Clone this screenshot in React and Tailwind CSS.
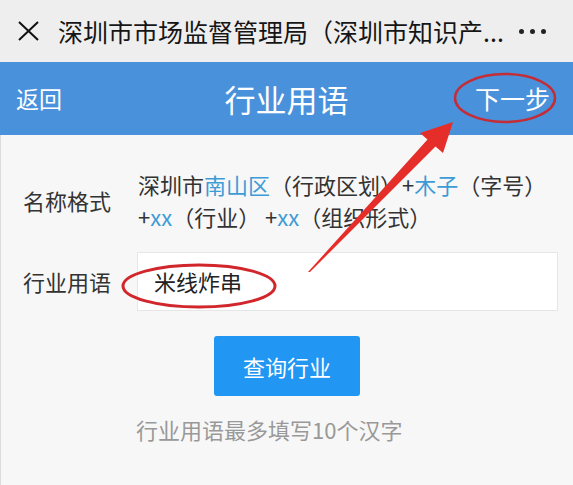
import React from "react";

const cjk = { fontFamily: '"Noto Sans CJK SC", "Noto Sans", sans-serif' };

function Annotations() {
    return (
        <svg className="absolute inset-0 pointer-events-none" width="573" height="485" viewBox="0 0 573 485">
            <ellipse cx="505" cy="98" rx="50" ry="24" fill="none" stroke="#c42d36" strokeWidth="2.5"/>
            <ellipse cx="199" cy="286" rx="76" ry="21" fill="none" stroke="#d1262b" strokeWidth="3"/>
            <polygon
                points="308,272 427.5,139.5 420,133 453,122 443,153 435.5,146.5 310,272"
                fill="#e52e2a"
            />
        </svg>
    );
}

export default function App() {
    return (
        <div className="relative w-[573px] h-[485px] overflow-hidden bg-[#f7f7f7]" style={cjk}>
            {/* wechat top bar */}
            <div className="h-[62px] bg-[#efeeee] flex items-center">
                <svg className="ml-[18px]" width="21" height="20" viewBox="0 0 21 20">
                    <path d="M1 1 L20 19 M20 1 L1 19" stroke="#111" strokeWidth="2" fill="none"/>
                </svg>
                <span className="ml-[19px] text-[25px] leading-none text-[#151515] whitespace-nowrap">
                    深圳市市场监督管理局（深圳市知识产...
                </span>
                <div className="ml-auto mr-[27px] flex gap-[6px]">
                    <span className="w-[5px] h-[5px] rounded-full bg-[#222]"></span>
                    <span className="w-[5px] h-[5px] rounded-full bg-[#222]"></span>
                    <span className="w-[5px] h-[5px] rounded-full bg-[#222]"></span>
                </div>
            </div>

            {/* blue header */}
            <div className="relative h-[73px] bg-[#4a91dc] flex items-center text-white">
                <span className="ml-[16px] text-[23px]">返回</span>
                <span className="absolute left-0 right-0 text-center text-[31px] leading-none">行业用语</span>
                <span className="ml-auto mr-[23px] text-[25px]">下一步</span>
            </div>

            {/* content */}
            <div className="border-l border-[#dcdcdc] h-full pt-[33px]">
                <div className="flex items-center">
                    <span className="w-[137px] pl-[22px] text-[22px] text-[#333]">名称格式</span>
                    <div className="text-[22px] leading-[32px] text-[#333]">
                        <div>
                            深圳市<span className="text-[#3d9bd6]">南山区</span>（行政区划）+<span className="text-[#3d9bd6]">木子</span>（字号）
                        </div>
                        <div>
                            +<span className="text-[#3d9bd6]">xx</span>（行业） +<span className="text-[#3d9bd6]">xx</span>（组织形式）
                        </div>
                    </div>
                </div>

                <div className="flex items-center mt-[20px]">
                    <span className="w-[136px] pl-[22px] text-[22px] text-[#333]">行业用语</span>
                    <div className="w-[421px] h-[59px] bg-white border border-[#e6e6e6] flex items-center pl-[16px] text-[22px] text-[#222]">
                        米线炸串
                    </div>
                </div>

                <div className="flex mt-[25px]">
                    <button className="ml-[213px] w-[146px] h-[60px] rounded-[3px] bg-[#2196f3] text-white text-[22px]">
                        查询行业
                    </button>
                </div>

                <p className="mt-[18px] pl-[135px] text-[22px] leading-[30px] text-[#999]">
                    行业用语最多填写10个汉字
                </p>
            </div>

            <Annotations/>
        </div>
    );
}
